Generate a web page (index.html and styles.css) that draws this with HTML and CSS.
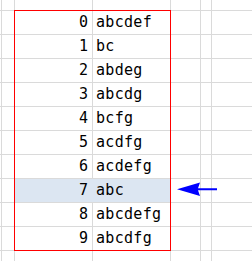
FILE: index.html
```html
<!DOCTYPE html>
<html>
<head>
<meta charset="utf-8">
<link rel="stylesheet" href="styles.css">
</head>
<body>
<div class="sheet">
  <div class="grid">
    <div class="c"></div><div class="c"></div><div class="c"></div><div class="c"></div><div class="c"></div><div class="c"></div><div class="c"></div>

    <div class="c"></div><div class="c"></div><div class="c num">0</div><div class="c txt">abcdef</div><div class="c"></div><div class="c"></div><div class="c"></div>
    <div class="c"></div><div class="c"></div><div class="c num">1</div><div class="c txt">bc</div><div class="c"></div><div class="c"></div><div class="c"></div>
    <div class="c"></div><div class="c"></div><div class="c num">2</div><div class="c txt">abdeg</div><div class="c"></div><div class="c"></div><div class="c"></div>
    <div class="c"></div><div class="c"></div><div class="c num">3</div><div class="c txt">abcdg</div><div class="c"></div><div class="c"></div><div class="c"></div>
    <div class="c"></div><div class="c"></div><div class="c num">4</div><div class="c txt">bcfg</div><div class="c"></div><div class="c"></div><div class="c"></div>
    <div class="c"></div><div class="c"></div><div class="c num">5</div><div class="c txt">acdfg</div><div class="c"></div><div class="c"></div><div class="c"></div>
    <div class="c"></div><div class="c"></div><div class="c num">6</div><div class="c txt">acdefg</div><div class="c"></div><div class="c"></div><div class="c"></div>
    <div class="c"></div><div class="c"></div><div class="c num sel">7</div><div class="c txt sel">abc</div><div class="c"></div><div class="c"></div><div class="c"></div>
    <div class="c"></div><div class="c"></div><div class="c num">8</div><div class="c txt">abcdefg</div><div class="c"></div><div class="c"></div><div class="c"></div>
    <div class="c"></div><div class="c"></div><div class="c num">9</div><div class="c txt">abcdfg</div><div class="c"></div><div class="c"></div><div class="c"></div>

    <div class="c"></div><div class="c"></div><div class="c"></div><div class="c"></div><div class="c"></div><div class="c"></div><div class="c"></div>
  </div>
  <div class="selection"></div>
  <svg class="arrow" width="44" height="16" viewBox="0 0 44 16">
    <path d="M0 7.25 L23 0.5 L21 6.2 L40 6.2 L40 8.3 L21 8.3 L23 14 Z" fill="#0000ff"/>
  </svg>
</div>
</body>
</html>
```

FILE: styles.css
```css
html, body {
  margin: 0;
  padding: 0;
  background: #ffffff;
}

.sheet {
  position: relative;
  width: 252px;
  height: 261px;
  overflow: hidden;
}

.grid {
  display: grid;
  grid-template-columns: 1px 12px 77px 77px 29px 10px 1fr;
  grid-template-rows: 10px repeat(10, 23px) 20px;
  gap: 1px;
  background: #dadada;
  width: 252px;
  height: 281px;
}

.c {
  background: #ffffff;
  font-family: "DejaVu Sans Mono", "Liberation Mono", monospace;
  font-size: 15px;
  line-height: 23px;
  color: #000000;
  white-space: nowrap;
}

.num {
  text-align: right;
  padding-right: 4px;
}

.txt {
  padding-left: 3px;
  letter-spacing: 0.3px;
}

.sel {
  background: #dce6f2;
}

.num.sel {
  box-shadow: 1px 0 0 #dce6f2;
}

.selection {
  position: absolute;
  left: 14px;
  top: 10px;
  width: 155px;
  height: 239px;
  border: 1px solid #ff0000;
}

.arrow {
  position: absolute;
  left: 177px;
  top: 182px;
}
```
